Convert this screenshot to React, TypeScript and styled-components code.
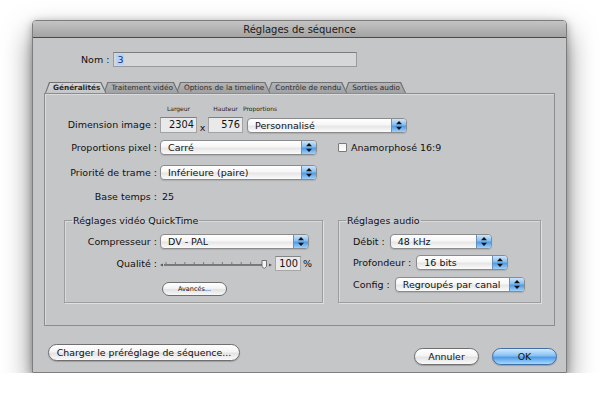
import React from 'react';
import styled, { createGlobalStyle } from 'styled-components';

const GlobalStyle = createGlobalStyle`
    body {
        margin: 0;
        background: #ffffff;
        font-family: 'DejaVu Sans', 'Liberation Sans', sans-serif;
    }
`

const tabs = ['Généralités', 'Traitement vidéo', 'Options de la timeline', 'Contrôle de rendu', 'Sorties audio'];

const Arrows = () => (
    <svg width='6' height='9' viewBox='0 0 6 9'>
        <polygon points='3,0 6,3.3 0,3.3' fill='#111' />
        <polygon points='0,5.7 6,5.7 3,9' fill='#111' />
    </svg>
)

const PopUp = ({ width, value }: { width: number; value: string }) => (
    <Popup $w={width}>
        <PopupText>{value}</PopupText>
        <PopupArrows><Arrows /></PopupArrows>
    </Popup>
)

const Slider = () => {
    const ticks = [];
    for (let x = 6; x <= 100; x += 9.4) ticks.push(x);
    return (
        <svg width='112' height='10' viewBox='0 0 112 10'>
            <polygon points='0,6 3,4.5 3,7.5' fill='#555' />
            {ticks.map((x, i) => (
                <line key={i} x1={x} y1='3' x2={x} y2='5' stroke='#6a6a6a' strokeWidth='0.8' />
            ))}
            <rect x='4' y='5.5' width='100' height='1.4' fill='#7b7b7b' />
            <rect x='4' y='5.5' width='100' height='0.6' fill='#4e4e4e' />
            <path d='M102,1.5 h4.5 v6 l-2.25,2 l-2.25,-2 z' fill='#f4f4f4' stroke='#555' strokeWidth='0.8' />
            <polygon points='112,6 109,4.5 109,7.5' fill='#555' />
        </svg>
    )
}

const App = () => {
    return (
        <Page>
            <GlobalStyle />
            <Window>
                <TitleBar>Réglages de séquence</TitleBar>
                <Body>
                    <NameRow>
                        <Text>Nom :</Text>
                        <NameField><Selected>3</Selected></NameField>
                    </NameRow>
                    <TabStrip>
                        {tabs.map((t, i) => (
                            <Tab key={t} $active={i === 0} $order={i}>
                                <TabLabel $active={i === 0}>{t}</TabLabel>
                            </Tab>
                        ))}
                    </TabStrip>
                    <Panel>
                        <Row $align='flex-end'>
                            <Label $h={16}>Dimension image :</Label>
                            <DimGrid>
                                <Caption $center>Largeur</Caption>
                                <span />
                                <Caption $center>Hauteur</Caption>
                                <Caption>Proportions</Caption>
                                <NumField $w={37}>2304</NumField>
                                <Times>x</Times>
                                <NumField $w={35}>576</NumField>
                                <PopWrap><PopUp width={160} value='Personnalisé' /></PopWrap>
                            </DimGrid>
                        </Row>
                        <Row $mt={7}>
                            <Label>Proportions pixel :</Label>
                            <PopUp width={157} value='Carré' />
                            <CheckRow>
                                <CheckBox />
                                <Text>Anamorphosé 16:9</Text>
                            </CheckRow>
                        </Row>
                        <Row $mt={10}>
                            <Label>Priorité de trame :</Label>
                            <PopUp width={157} value='Inférieure (paire)' />
                        </Row>
                        <Row $mt={11}>
                            <Label $h={12}>Base temps :</Label>
                            <Value>25</Value>
                        </Row>
                        <Groups>
                            <Group $w={259}>
                                <Legend>Réglages vidéo QuickTime</Legend>
                                <Row $mt={8}>
                                    <Label $w={95}>Compresseur :</Label>
                                    <PopUp width={149} value='DV - PAL' />
                                </Row>
                                <Row $mt={7}>
                                    <Label $w={95} $h={15}>Qualité :</Label>
                                    <Slider />
                                    <PercentField>100</PercentField>
                                    <Value>%</Value>
                                </Row>
                                <SmallButton>Avancés...</SmallButton>
                            </Group>
                            <Group $w={203}>
                                <Legend>Réglages audio</Legend>
                                <AudioRow $mt={8}>
                                    <Text>Débit :</Text>
                                    <PopUp width={102} value='48 kHz' />
                                </AudioRow>
                                <AudioRow $mt={6}>
                                    <Text>Profondeur :</Text>
                                    <PopUp width={92} value='16 bits' />
                                </AudioRow>
                                <AudioRow $mt={7}>
                                    <Text>Config :</Text>
                                    <PopUp width={130} value='Regroupés par canal' />
                                </AudioRow>
                            </Group>
                        </Groups>
                    </Panel>
                    <Footer>
                        <PushButton $w={192}>Charger le préréglage de séquence...</PushButton>
                        <ButtonGroup>
                            <PushButton $w={65}>Annuler</PushButton>
                            <PushButton $w={65} $default>OK</PushButton>
                        </ButtonGroup>
                    </Footer>
                </Body>
            </Window>
        </Page>
    )
}

export default App;

const Page = styled.div`
    padding: 20px 0 0 32px;
`
const Window = styled.div`
    width: 535px;
    height: 353px;
    box-sizing: border-box;
    display: flex;
    flex-direction: column;
    border: 1px solid #7d7d7d;
    border-radius: 4px 4px 0 0;
    box-shadow: 0 14px 28px rgba(0, 0, 0, 0.5), 0 2px 8px rgba(0, 0, 0, 0.3);
    overflow: hidden;
`
const TitleBar = styled.div`
    height: 17px;
    box-sizing: border-box;
    display: flex;
    align-items: center;
    justify-content: center;
    background: linear-gradient(#c4c4c4, #a3a3a3);
    border-bottom: 1px solid #4a4a4a;
    font-size: 10px;
    color: #1b1b1b;
`
const Body = styled.div`
    flex: 1;
    display: flex;
    flex-direction: column;
    background: #c5c6c8;
    padding: 14px 11px 0 11px;
    font-size: 9.5px;
    color: #111;
`
const Text = styled.span`
    font-size: 9.5px;
    white-space: nowrap;
`
const NameRow = styled.div`
    display: flex;
    align-items: center;
    gap: 4px;
    padding-left: 37px;
    height: 15px;
`
const NameField = styled.div`
    width: 244px;
    height: 15px;
    box-sizing: border-box;
    background: #d6d7d9;
    border: 1px solid #9a9a9a;
    border-top-color: #7c7c7c;
    padding: 1px 2px;
    font-size: 9.5px;
    line-height: 11px;
`
const Selected = styled.span`
    background: #b6d3f5;
    color: #12307a;
    padding: 0 1px;
`
const TabStrip = styled.div`
    display: flex;
    margin-top: 15px;
    padding-left: 1px;
    height: 11px;
`
const Tab = styled.div<{ $active?: boolean; $order: number }>`
    position: relative;
    z-index: ${p => 10 - p.$order};
    margin-left: ${p => (p.$order === 0 ? 0 : -3)}px;
    height: 11px;
    padding: 0 6px 0 8px;
    display: flex;
    align-items: center;
    background: #727272;
    clip-path: polygon(0 100%, 4px 0, calc(100% - 5px) 0, 100% 100%);
    &::before {
        content: '';
        position: absolute;
        inset: 1px 1px 0 1px;
        clip-path: polygon(0 100%, 4px 0, calc(100% - 5px) 0, 100% 100%);
        background: ${p => (p.$active ? 'linear-gradient(#d3d4d6, #c5c6c8)' : 'linear-gradient(#b3b4b6, #a0a1a3)')};
    }
`
const TabLabel = styled.span<{ $active?: boolean }>`
    position: relative;
    font-size: 7.3px;
    font-weight: ${p => (p.$active ? 'bold' : 'normal')};
    color: ${p => (p.$active ? '#2a2a2a' : '#2e2e2e')};
    white-space: nowrap;
`
const Panel = styled.div`
    width: 511px;
    height: 233px;
    box-sizing: border-box;
    border: 1px solid #8c8c8c;
    box-shadow: inset 1px 1px 0 rgba(255, 255, 255, 0.35);
    padding-top: 11px;
    display: flex;
    flex-direction: column;
`
const Row = styled.div<{ $align?: string; $mt?: number }>`
    display: flex;
    align-items: ${p => p.$align || 'center'};
    margin-top: ${p => p.$mt || 0}px;
`
const Label = styled.span<{ $w?: number; $h?: number }>`
    width: ${p => p.$w || 115}px;
    flex-shrink: 0;
    text-align: right;
    padding-right: 3px;
    box-sizing: border-box;
    line-height: ${p => p.$h || 15}px;
    white-space: nowrap;
`
const DimGrid = styled.div`
    display: grid;
    grid-template-columns: 37px 11px 35px auto;
    grid-template-rows: 7px 16px;
    row-gap: 5px;
    align-items: center;
`
const Caption = styled.span<{ $center?: boolean }>`
    font-size: 6px;
    line-height: 7px;
    color: #222;
    text-align: ${p => (p.$center ? 'center' : 'left')};
    white-space: nowrap;
`
const NumField = styled.div<{ $w: number }>`
    width: ${p => p.$w}px;
    height: 16px;
    box-sizing: border-box;
    background: #e9e9ea;
    border: 1px solid #a2a2a2;
    border-top-color: #7f7f7f;
    text-align: right;
    padding-right: 2px;
    font-size: 9.8px;
    line-height: 14px;
`
const Times = styled.span`
    text-align: center;
    font-size: 9.5px;
    padding-top: 4px;
`
const PopWrap = styled.div`
    margin-left: 4px;
    display: flex;
`
const Popup = styled.div<{ $w: number }>`
    display: inline-flex;
    flex-shrink: 0;
    width: ${p => p.$w}px;
    height: 15px;
    box-sizing: border-box;
    border: 1px solid #8b8b8b;
    border-radius: 4px;
    overflow: hidden;
    background: linear-gradient(#ffffff, #f6f6f6 45%, #e6e6e6 55%, #fbfbfb);
    box-shadow: 0 1px 1px rgba(0, 0, 0, 0.12);
`
const PopupText = styled.span`
    flex: 1;
    padding-left: 7px;
    font-size: 9.5px;
    line-height: 13px;
    white-space: nowrap;
    overflow: hidden;
`
const PopupArrows = styled.span`
    width: 14px;
    display: flex;
    align-items: center;
    justify-content: center;
    border-left: 1px solid #6b8fb9;
    background: linear-gradient(#cde5fb, #85bef1 45%, #4f9ae6 55%, #9ed2fa);
`
const CheckRow = styled.div`
    display: flex;
    align-items: center;
    gap: 4px;
    margin-left: 21px;
`
const CheckBox = styled.span`
    width: 9px;
    height: 9px;
    box-sizing: border-box;
    border: 1px solid #7a7a7a;
    border-radius: 1px;
    background: linear-gradient(#f2f2f2, #ffffff);
`
const Value = styled.span`
    padding-left: 2px;
    line-height: 12px;
`
const Groups = styled.div`
    display: flex;
    gap: 15px;
    margin-top: 12px;
    padding-left: 19px;
`
const Group = styled.fieldset<{ $w: number }>`
    width: ${p => p.$w}px;
    height: 88px;
    box-sizing: border-box;
    margin: 0;
    padding: 0;
    border: 1px solid #9d9d9d;
    box-shadow: 1px 1px 0 rgba(255, 255, 255, 0.45), inset 1px 1px 0 rgba(255, 255, 255, 0.35);
    display: flex;
    flex-direction: column;
`
const Legend = styled.legend`
    margin-left: 7px;
    padding: 0 1px;
    font-size: 9.5px;
    line-height: 11px;
`
const PercentField = styled.div`
    width: 26px;
    height: 15px;
    box-sizing: border-box;
    margin-left: 3px;
    background: #e9e9ea;
    border: 1px solid #a7a7a7;
    border-top-color: #858585;
    text-align: right;
    padding-right: 2px;
    font-size: 9.8px;
    line-height: 13px;
`
const SmallButton = styled.button`
    align-self: flex-start;
    margin: 11px 0 0 97px;
    width: 65px;
    height: 14px;
    padding: 0;
    border: 1px solid #6f6f6f;
    border-radius: 7px;
    background: linear-gradient(#ffffff, #f3f3f3 45%, #e2e2e2 55%, #f8f8f8);
    font-family: 'DejaVu Sans', sans-serif;
    font-size: 6.5px;
    color: #111;
`
const AudioRow = styled.div<{ $mt: number }>`
    display: flex;
    align-items: center;
    gap: 5px;
    padding-left: 14px;
    margin-top: ${p => p.$mt}px;
`
const Footer = styled.div`
    flex: 1;
    display: flex;
    align-items: flex-start;
    justify-content: space-between;
    padding: 18px 0 0 4px;
    margin-right: -2px;
`
const ButtonGroup = styled.div`
    display: flex;
    gap: 13px;
    margin-top: 4px;
`
const PushButton = styled.button<{ $w: number; $default?: boolean }>`
    width: ${p => p.$w}px;
    height: 17px;
    padding: 0;
    border: 1px solid ${p => (p.$default ? '#3f6fa8' : '#6f6f6f')};
    border-radius: 9px;
    background: ${p => (p.$default
        ? 'linear-gradient(#d3e9fc, #86c0f3 45%, #4e9be8 55%, #a8d8fc)'
        : 'linear-gradient(#ffffff, #f4f4f4 45%, #e3e3e3 55%, #fafafa)')};
    box-shadow: 0 1px 1px rgba(0, 0, 0, 0.2);
    font-family: 'DejaVu Sans', sans-serif;
    font-size: 9.4px;
    color: #111;
    white-space: nowrap;
`
